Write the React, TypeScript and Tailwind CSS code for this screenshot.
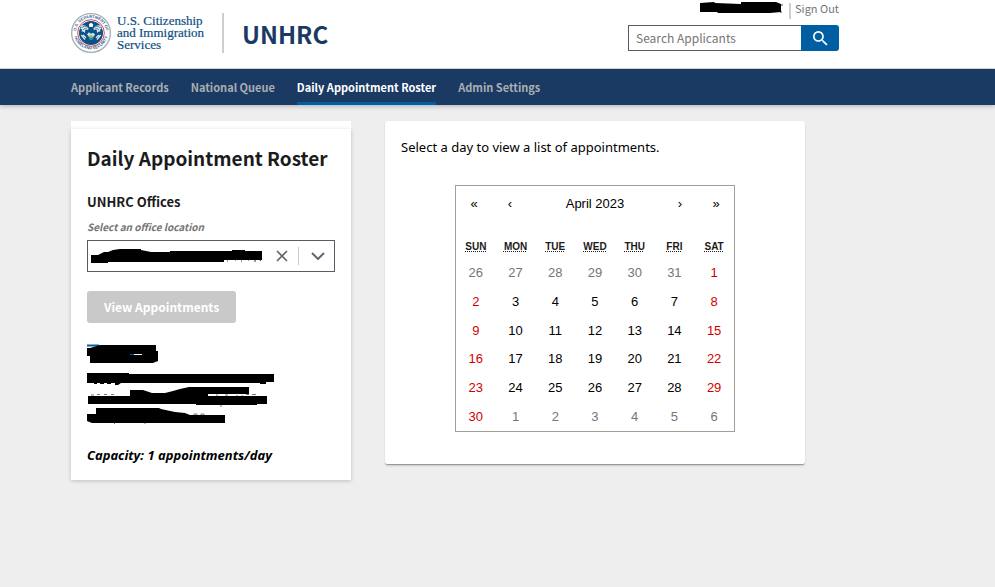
import { useState } from 'react'
import type { ReactNode } from 'react'

const NAV_ITEMS = ['Applicant Records', 'National Queue', 'Daily Appointment Roster', 'Admin Settings']

const WEEKDAYS = [
  { short: 'Sun', full: 'Sunday' },
  { short: 'Mon', full: 'Monday' },
  { short: 'Tue', full: 'Tuesday' },
  { short: 'Wed', full: 'Wednesday' },
  { short: 'Thu', full: 'Thursday' },
  { short: 'Fri', full: 'Friday' },
  { short: 'Sat', full: 'Saturday' },
]

const MONTHS = [
  'January', 'February', 'March', 'April', 'May', 'June',
  'July', 'August', 'September', 'October', 'November', 'December',
]

function getWeeks(year: number, month: number) {
  const offset = new Date(year, month, 1).getDay()
  const total = new Date(year, month + 1, 0).getDate()
  const rows = Math.ceil((offset + total) / 7)
  return Array.from({ length: rows }, (_, row) =>
    Array.from({ length: 7 }, (_, col) => new Date(year, month, row * 7 + col + 1 - offset))
  )
}

function Seal() {
  return (
    <svg viewBox="0 0 120 120" className="h-10 w-10 shrink-0" aria-hidden="true">
      <defs>
        <path id="seal-top" d="M16 69 A45 45 0 1 1 104 69" />
        <path id="seal-bottom" d="M9 67 A52 52 0 0 0 111 67" />
      </defs>
      <circle cx="60" cy="60" r="58" fill="#fff" stroke="#a9adb0" strokeWidth="4" />
      <g fill="#2a6496" fontSize="12" fontWeight="700" fontFamily="'Liberation Sans', sans-serif">
        <text>
          <textPath href="#seal-top" startOffset="50%" textAnchor="middle">U.S. DEPARTMENT OF</textPath>
        </text>
        <text>
          <textPath href="#seal-bottom" startOffset="50%" textAnchor="middle">HOMELAND SECURITY</textPath>
        </text>
      </g>
      <circle cx="60" cy="60" r="40" fill="#fff" stroke="#d6495b" strokeWidth="3" />
      <circle cx="60" cy="60" r="36" fill="#0b5286" />
      {/* wings */}
      <path
        d="M52 44 C44 37 36 35 29 39 L32 43 L28 47 L34 50 L31 55 L38 56 L42 60 L44 50 H52 Z M68 44 C76 37 84 35 91 39 L88 43 L92 47 L86 50 L89 55 L82 56 L78 60 L76 50 H68 Z"
        fill="#dfe9f0"
      />
      <path d="M50 43 C43 39 37 40 33 44 M48 48 C43 46 39 47 36 51 M70 43 C77 39 83 40 87 44 M72 48 C77 46 81 47 84 51" stroke="#0b5286" strokeWidth="2" fill="none" />
      <path d="M54 34 L60 29 L67 34 L65 42 L55 42 Z" fill="#fff" />
      {/* shield */}
      <path d="M43 51 H77 V66 C77 76 69 82 60 86 C51 82 43 76 43 66 Z" fill="#0b5286" />
      <path d="M48 64 L54 58 L60 62 L66 59 L72 64 L69 70 H52 Z" fill="#cfe2ea" />
      <path d="M52 70 L60 65 L69 70 L66 74 H55 Z" fill="#9fc27a" />
      <path d="M52 76 H68 L60 82 Z" fill="#4b9cc4" />
      <path d="M31 66 L42 80 M89 66 L78 80 M36 66 L45 74 M84 66 L75 74" stroke="#dfe9f0" strokeWidth="4" />
    </svg>
  )
}

function Header({ children }: { children: ReactNode }) {
  return (
    <header>
      <div className="border-b border-[#d6d7d9] bg-white">
        <div className="flex h-17 max-w-[839px] justify-between pl-[71px]">
          <div className="flex items-center pb-[2px]">
            <Seal />
            <p className="ml-[6px] font-['Liberation_Serif',serif] text-[13px] leading-3 text-[#0b4f84] [-webkit-text-stroke:0.2px_#0b4f84]">
              U.S. Citizenship
              <br />
              and Immigration
              <br />
              Services
            </p>
            <div className="ml-[18px] h-10 w-[2px] bg-[#cfcfcf]" />
            <span className="ml-[18px] pt-[2px] text-2xl leading-7 font-bold text-[#1a3a64]">UNHRC</span>
          </div>
          <div className="flex w-[211px] flex-col">
            <div className="flex h-[25px] items-start justify-end">
              <svg viewBox="0 0 83 16" className="mr-[6px] h-4 w-[83px]" aria-hidden="true">
                <path d="M81 5 h2 M80 12 h2" stroke="#2b4f86" />
                <path d="M0 3 L14 2 L15 3 L41 4 V2 H76 L81 4 V12 L70 13 H18 L17 12 H0 Z" fill="#000" />
              </svg>
              <div className="mt-[3px] h-4 w-[2px] bg-[#cfcfcf]" />
              <a href="#sign-out" className="ml-1 text-[11px] leading-4 text-[#71767a]">
                Sign Out
              </a>
            </div>
            <form className="flex h-[26px]" role="search" onSubmit={(e) => e.preventDefault()}>
              <input
                type="search"
                aria-label="Search Applicants"
                placeholder="Search Applicants"
                className="min-w-0 flex-1 border border-r-0 border-[#565c65] bg-white px-[7px] text-xs leading-4 placeholder:text-[#757575]"
              />
              <button
                type="submit"
                aria-label="Search"
                className="flex w-[38px] items-center justify-center rounded-r-[3px] bg-[#005ea2] text-white"
              >
                <svg viewBox="3 3 18 18" className="h-[15px] w-[15px]" fill="currentColor" aria-hidden="true">
                  <path d="M15.5 14h-.79l-.28-.27A6.47 6.47 0 0 0 16 9.5 6.5 6.5 0 1 0 9.5 16c1.61 0 3.09-.59 4.23-1.57l.27.28v.79l5 4.99L20.49 19l-4.99-5zm-6 0C7.01 14 5 11.99 5 9.5S7.01 5 9.5 5 14 7.01 14 9.5 11.99 14 9.5 14z" />
                </svg>
              </button>
            </form>
          </div>
        </div>
      </div>
      {children}
    </header>
  )
}

function OfficePanel() {
  return (
    <section className="w-[280px] shrink-0 bg-white pt-2">
      <div className="px-4 pt-4 pb-[15px] shadow-[0_1px_4px_rgba(0,0,0,0.2)]">
        <h1 className="text-[19px] leading-[26px] font-bold whitespace-nowrap text-[#1b1b1b]">Daily Appointment Roster</h1>
        <label htmlFor="office" className="mt-[21px] block text-[13px] leading-5 font-bold text-[#1b1b1b]">
          UNHRC Offices
        </label>
        <p id="office-hint" className="mt-[7px] text-[10px] leading-4 font-bold text-[#757575] italic">
          Select an office location
        </p>
        <div className="mt-[5px] grid h-8 border border-[#565c65]">
          <select
            id="office"
            aria-describedby="office-hint"
            className="col-start-1 row-start-1 w-full appearance-none bg-transparent"
          >
            <option value="1" />
          </select>
          <div className="pointer-events-none col-start-1 row-start-1 flex items-center">
            <svg viewBox="0 0 172 16" className="ml-[3px] h-4 w-[172px]" aria-hidden="true">
              <path d="M136 13 h1 M144 12 h1 M150 13 h1 M157 12 h1 M163 13 h2 M169 13 l2 -3" stroke="#333" />
              <path d="M0 7 H7 L13 4 H17 L22 2 L29 1 H50 V2 L60 4 H79 V3 H141 V2 H154 V3 H171 V12 H133 V14 H17 V15 H0 Z" fill="#000" />
            </svg>
            <button type="button" aria-label="Clear" className="pointer-events-auto ml-[13px] text-[#666]">
              <svg viewBox="0 0 12 12" className="h-3 w-3" fill="none" stroke="currentColor" strokeWidth="1.7">
                <path d="M1 1 L11 11 M11 1 L1 11" />
              </svg>
            </button>
            <div className="ml-[10px] h-[18px] w-px bg-[#ccc]" />
            <svg viewBox="0 0 14 8" className="ml-3 h-2 w-[14px]" fill="none" stroke="#666" strokeWidth="2" aria-hidden="true">
              <path d="M1 1 L7 7 L13 1" />
            </svg>
          </div>
        </div>
        <button
          type="button"
          disabled
          className="mt-[19px] h-8 rounded-[3px] bg-[#c9c9c9] px-[17px] text-xs leading-4 font-bold text-white"
        >
          View Appointments
        </button>
        <svg viewBox="0 0 188 80" className="mt-[21px] h-20 w-[188px]" aria-hidden="true">
          <path d="M0 1.5 H12" stroke="#005ea2" strokeWidth="2" />
          <path d="M0 4 H3 L13 1 H69 V7 H71 V17 L66 19 H3 V12 H0 Z" fill="#000" />
          <path d="M43 10.5 H47" stroke="#005ea2" />
          <path d="M47 10.5 H55" stroke="#fff" />
          <path d="M0 29 H42 V30 H187 V38 H179 V40 H173 V39 H34 L31 41 H28 V39 H24 V40 H20 V39 H17 V40 H13 V39 H10 V40 H7 V39 H0 Z" fill="#000" />
          <path d="M4 51 H7 M10 50.5 H13 M17 50.5 H20 M24 50.5 H27 M129 51 H131 M138 51 H141 M150 51 V52 M155 51 V52 M159 50.5 H162 M165 50.5 H169 M134 61 V63" stroke="#777" />
          <path d="M1 52 H43 V46 H56 L65 49 H78 L86 47 L93 45 L102 43 H162 V50 H121 V52 H180 V60 H170 V61 H109 V60 H1 Z" fill="#000" />
          <path d="M107 71 V70 H110 V71 M114 71 V70 H117 V71 M27 80 L29 78 M58 80 V78" stroke="#777" fill="none" />
          <path d="M0 70 H9 V64 H72 L74 65 L88 68 L98 69 L103 71 H138 V79 H5 L0 77 Z" fill="#000" />
        </svg>
        <p className="mt-[21px] font-['Noto_Sans',sans-serif] text-[13px] leading-5 font-bold text-black italic">
          Capacity: 1 appointments/day
        </p>
      </div>
    </section>
  )
}

function Calendar() {
  const [shown, setShown] = useState({ year: 2023, month: 3 })

  const move = (months: number) => {
    const next = new Date(shown.year, shown.month + months, 1)
    setShown({ year: next.getFullYear(), month: next.getMonth() })
  }

  const dayColor = (day: Date) => {
    if (day.getMonth() !== shown.month) return 'text-[#757575]'
    if (day.getDay() === 0 || day.getDay() === 6) return 'text-[#d10000]'
    return 'text-black'
  }

  return (
    <div className="mx-auto w-[280px] border border-[#a0a096] bg-white font-['Liberation_Sans',sans-serif] text-[13px] leading-4 text-black">
      <div className="mb-[13px] flex h-9">
        <button type="button" aria-label="Previous year" className="w-9" onClick={() => move(-12)}>
          «
        </button>
        <button type="button" aria-label="Previous month" className="w-9" onClick={() => move(-1)}>
          ‹
        </button>
        <span className="flex-1 self-center text-center" aria-live="polite">
          {MONTHS[shown.month]} {shown.year}
        </span>
        <button type="button" aria-label="Next month" className="w-9" onClick={() => move(1)}>
          ›
        </button>
        <button type="button" aria-label="Next year" className="w-9" onClick={() => move(12)}>
          »
        </button>
      </div>
      <table className="h-[196px] w-full table-fixed border-collapse text-center">
        <thead>
          <tr className="h-6">
            {WEEKDAYS.map((day) => (
              <th key={day.short} scope="col" className="p-0 text-[10px] leading-3 font-bold text-[#1b1b1b] uppercase">
                <abbr title={day.full} className="underline decoration-dotted">
                  {day.short}
                </abbr>
              </th>
            ))}
          </tr>
        </thead>
        <tbody>
          {getWeeks(shown.year, shown.month).map((week) => (
            <tr key={week[0].toISOString()}>
              {week.map((day) => (
                <td key={day.toISOString()} className="p-0">
                  <button type="button" className={`w-full ${dayColor(day)}`}>
                    {day.getDate()}
                  </button>
                </td>
              ))}
            </tr>
          ))}
        </tbody>
      </table>
    </div>
  )
}

export default function App() {
  const [active, setActive] = useState('Daily Appointment Roster')

  return (
    <div className="min-h-screen bg-[#eee] font-['Noto_Sans_CJK_SC',sans-serif]">
      <Header>
        <nav className="bg-[#1a3a64] pl-[71px] shadow-[0_2px_4px_rgba(0,0,0,0.2)]">
          <ul className="flex h-9 gap-[22px]">
            {NAV_ITEMS.map((item) => (
              <li key={item} className="flex">
                <a
                  href="#"
                  onClick={() => setActive(item)}
                  aria-current={item === active ? 'page' : undefined}
                  className={`flex items-center border-b-[3px] pt-[2px] text-[11px] leading-4 font-bold ${
                    item === active ? 'border-[#005ea2] text-white' : 'border-transparent text-[#a9aeb1]'
                  }`}
                >
                  {item}
                </a>
              </li>
            ))}
          </ul>
        </nav>
      </Header>
      <main className="flex max-w-[805px] items-start gap-[34px] pt-4 pl-[71px]">
        <OfficePanel />
        <section className="flex-1 rounded-[3px] border-b border-[#999] bg-white px-4 pt-4 pb-8 shadow-[0_1px_2px_rgba(0,0,0,0.15)]">
          <p className="mb-7 font-['Noto_Sans',sans-serif] text-[13px] leading-5 text-black">
            Select a day to view a list of appointments.
          </p>
          <Calendar />
        </section>
      </main>
    </div>
  )
}
